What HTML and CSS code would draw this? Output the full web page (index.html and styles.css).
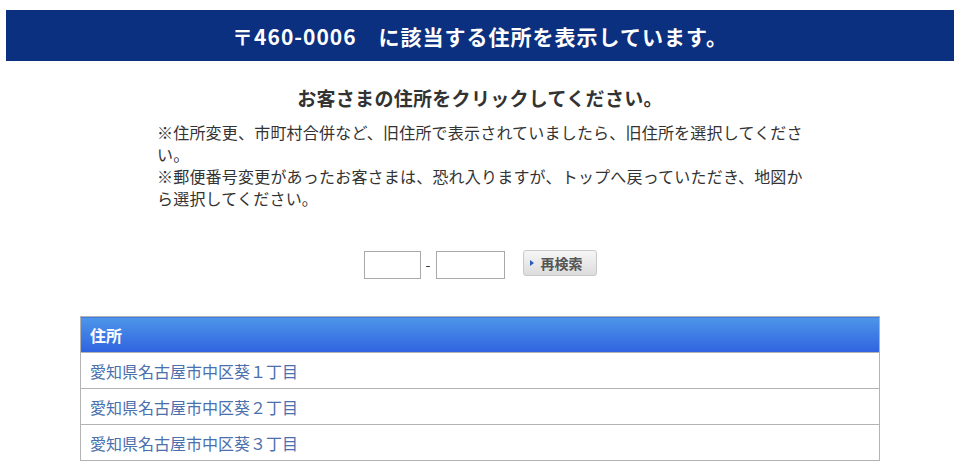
FILE: index.html
```html
<!DOCTYPE html>
<html lang="ja">
<head>
  <meta charset="UTF-8" />
  <meta name="viewport" content="width=device-width, initial-scale=1.0"/>
  <title>住所検索結果</title>
  <link rel="stylesheet" href="styles.css">
</head>
<body>

  <div class="page">
    <h1 class="result-title">〒460-0006　に該当する住所を表示しています。</h1>

    <h2 class="lead">お客さまの住所をクリックしてください。</h2>

    <div class="notes">
      <p>※住所変更、市町村合併など、旧住所で表示されていましたら、旧住所を選択してください。</p>
      <p>※郵便番号変更があったお客さまは、恐れ入りますが、トップへ戻っていただき、地図から選択してください。</p>
    </div>

    <form class="zip-form" onsubmit="return false;">
      <input type="text" class="zip1" maxlength="3">
      <span class="dash">-</span>
      <input type="text" class="zip2" maxlength="4">
      <button type="submit" class="research"><span class="tri"></span>再検索</button>
    </form>

    <table class="address-list">
      <thead>
        <tr><th>住所</th></tr>
      </thead>
      <tbody>
        <tr><td><a href="#">愛知県名古屋市中区葵１丁目</a></td></tr>
        <tr><td><a href="#">愛知県名古屋市中区葵２丁目</a></td></tr>
        <tr><td><a href="#">愛知県名古屋市中区葵３丁目</a></td></tr>
      </tbody>
    </table>
  </div>

</body>
</html>
```

FILE: styles.css
```css
body {
  margin: 0;
  font-family: "Noto Sans CJK JP", "Noto Sans", sans-serif;
  color: #333;
  background: #fff;
}

.page {
  width: 948px;
  margin: 10px 0 0 6px;
}

.result-title {
  margin: 0;
  height: 51px;
  background: #0c3080;
  color: #fff;
  font-size: 21px;
  font-weight: bold;
  letter-spacing: 1px;
  display: flex;
  align-items: center;
  justify-content: center;
}

.lead {
  margin: 24px 0 0;
  text-align: center;
  font-size: 19px;
  font-weight: bold;
  letter-spacing: 0.3px;
  color: #333;
  line-height: 26px;
}

.notes {
  width: 647px;
  margin: 10px auto 0;
  padding-left: 1px;
  font-size: 16px;
  letter-spacing: 0.2px;
  line-height: 22px;
}

.notes p {
  margin: 0;
}

.zip-form {
  display: flex;
  align-items: flex-start;
  justify-content: center;
  margin: 42px 0 0;
}

.zip-form input {
  box-sizing: border-box;
  height: 28px;
  border: 1px solid #a9a9a9;
  padding: 2px 4px;
  font-size: 14px;
  margin: 0;
}

.zip1 {
  width: 57px;
}

.zip2 {
  width: 69px;
}

.dash {
  width: 15px;
  text-align: center;
  font-size: 14px;
  line-height: 26px;
  color: #333;
}

.research {
  box-sizing: border-box;
  margin: -1px 0 0 18px;
  width: 74px;
  height: 26px;
  border: 1px solid #c9c9c9;
  border-radius: 3px;
  background: linear-gradient(#f6f6f6, #dcdcdc);
  color: #555;
  font-family: inherit;
  font-size: 14px;
  font-weight: bold;
  display: flex;
  align-items: center;
  padding: 0 0 0 6px;
  gap: 7px;
  cursor: pointer;
}

.tri {
  width: 0;
  height: 0;
  border-top: 3px solid transparent;
  border-bottom: 3px solid transparent;
  border-left: 4px solid #2a5bb5;
}

.address-list {
  width: 800px;
  margin: 37px auto 0;
  border-collapse: collapse;
  font-size: 16px;
}

.address-list th,
.address-list td {
  border: 1px solid #b3b3b3;
  height: 36px;
  padding: 0 9px;
  text-align: left;
  box-sizing: border-box;
}

.address-list th {
  height: 36px;
  background: linear-gradient(#4d96e9, #3063e0);
  color: #fff;
  font-weight: bold;
}

.address-list a {
  color: #4a70ad;
  text-decoration: none;
}
```
